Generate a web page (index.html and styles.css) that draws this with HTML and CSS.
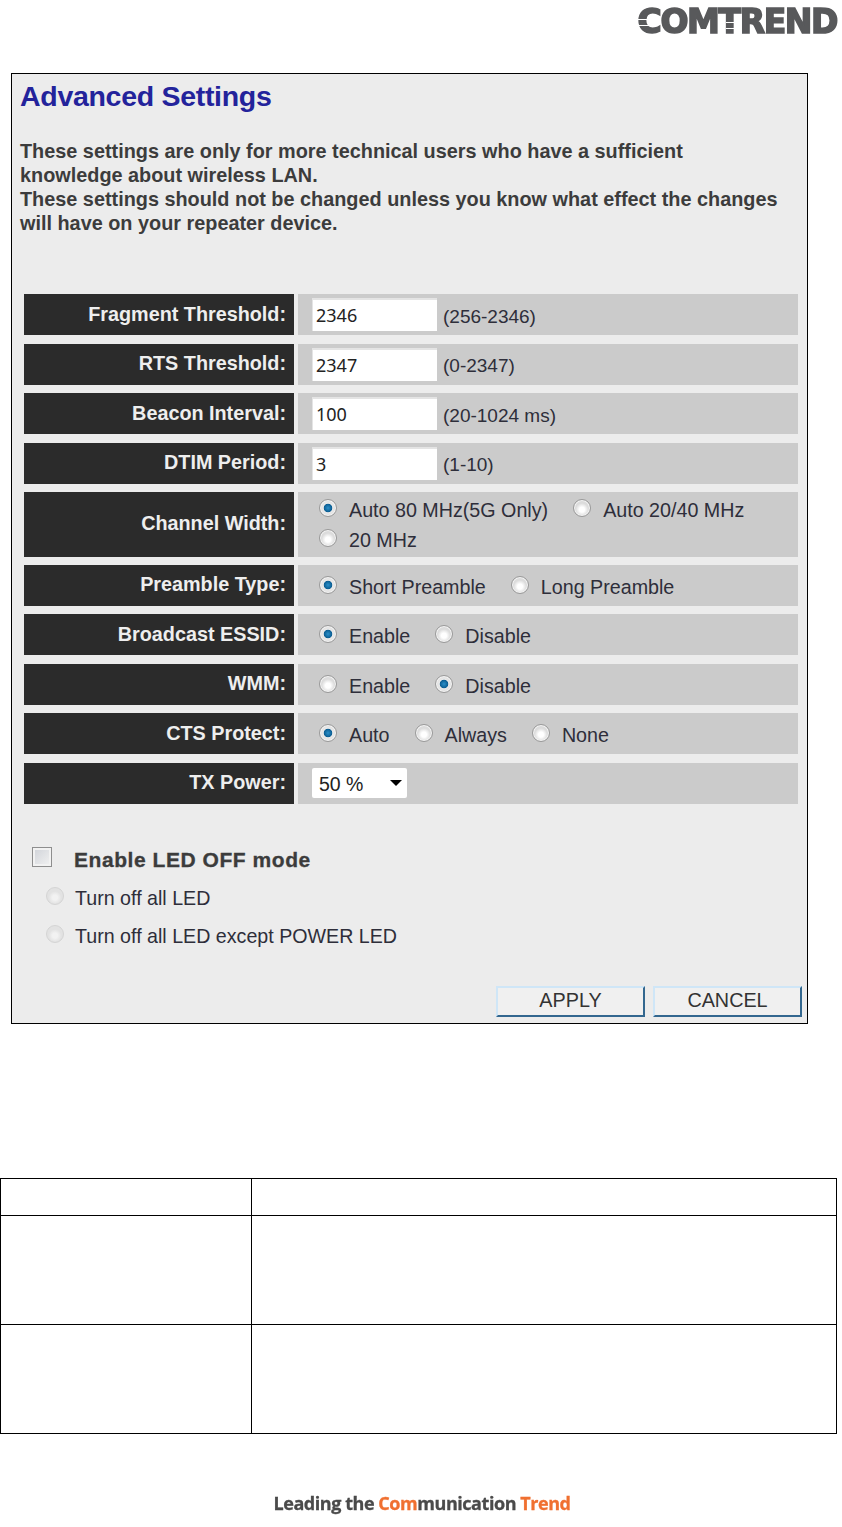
FILE: index.html
```html
<!DOCTYPE html>
<html lang="en">
<head>
  <meta charset="UTF-8">
  <title>Advanced Settings</title>
  <link rel="stylesheet" href="styles.css">
</head>
<body>
  <div class="logo-bar">
    <div class="logo">
      COMTREND
      <span class="stripes stripes-c"></span>
      <span class="stripes stripes-t"></span>
    </div>
  </div>

  <div class="panel">
    <h2>Advanced Settings</h2>
    <p class="intro">
      These settings are only for more technical users who have a sufficient<br>
      knowledge about wireless LAN.<br>
      These settings should not be changed unless you know what effect the changes<br>
      will have on your repeater device.
    </p>

    <div class="settings">
      <div class="row">
        <div class="label">Fragment Threshold:</div>
        <div class="value"><input class="num" type="text" value="2346"><span>(256-2346)</span></div>
      </div>
      <div class="row">
        <div class="label">RTS Threshold:</div>
        <div class="value"><input class="num" type="text" value="2347"><span>(0-2347)</span></div>
      </div>
      <div class="row">
        <div class="label">Beacon Interval:</div>
        <div class="value"><input class="num" type="text" value="100"><span>(20-1024 ms)</span></div>
      </div>
      <div class="row">
        <div class="label">DTIM Period:</div>
        <div class="value"><input class="num" type="text" value="3"><span>(1-10)</span></div>
      </div>
      <div class="row row-tall">
        <div class="label">Channel Width:</div>
        <div class="value value-stack">
          <div class="radios">
            <label><input type="radio" name="cw" checked>Auto 80 MHz(5G Only)</label>
            <label><input type="radio" name="cw">Auto 20/40 MHz</label>
          </div>
          <div class="radios">
            <label><input type="radio" name="cw">20 MHz</label>
          </div>
        </div>
      </div>
      <div class="row">
        <div class="label">Preamble Type:</div>
        <div class="value radios">
          <label><input type="radio" name="pre" checked>Short Preamble</label>
          <label><input type="radio" name="pre">Long Preamble</label>
        </div>
      </div>
      <div class="row">
        <div class="label">Broadcast ESSID:</div>
        <div class="value radios">
          <label><input type="radio" name="essid" checked>Enable</label>
          <label><input type="radio" name="essid">Disable</label>
        </div>
      </div>
      <div class="row">
        <div class="label">WMM:</div>
        <div class="value radios">
          <label><input type="radio" name="wmm">Enable</label>
          <label><input type="radio" name="wmm" checked>Disable</label>
        </div>
      </div>
      <div class="row">
        <div class="label">CTS Protect:</div>
        <div class="value radios">
          <label><input type="radio" name="cts" checked>Auto</label>
          <label><input type="radio" name="cts">Always</label>
          <label><input type="radio" name="cts">None</label>
        </div>
      </div>
      <div class="row">
        <div class="label">TX Power:</div>
        <div class="value">
          <div class="select">50 %<span class="arrow"></span></div>
        </div>
      </div>
    </div>

    <div class="led">
      <label class="led-title"><input type="checkbox">Enable LED OFF mode</label>
      <label class="led-option"><input type="radio" name="led" disabled>Turn off all LED</label>
      <label class="led-option"><input type="radio" name="led" disabled>Turn off all LED except POWER LED</label>
    </div>

    <div class="buttons">
      <button>APPLY</button>
      <button>CANCEL</button>
    </div>
  </div>

  <table class="doc-table">
    <tr class="head"><td class="first"></td><td></td></tr>
    <tr><td class="first"></td><td></td></tr>
    <tr><td class="first"></td><td></td></tr>
  </table>

  <div class="slogan">Leading the <span class="orange">Com</span>munication <span class="orange">Trend</span></div>
</body>
</html>
```

FILE: styles.css
```css
body {
  margin: 0;
  background: white;
  font-family: "Liberation Sans", Arial, sans-serif;
  color: #333;
}

.logo-bar {
  height: 73px;
  display: flex;
  justify-content: flex-end;
  padding-right: 5px;
  box-sizing: border-box;
}
.logo {
  position: relative;
  height: 44px;
  margin-top: 2px;
  font-family: "DejaVu Sans", sans-serif;
  font-weight: bold;
  font-size: 33px;
  line-height: 40px;
  letter-spacing: -1.4px;
  color: #58595b;
  -webkit-text-stroke: 1.6px #58595b;
  filter: blur(0.4px);
}
.stripes {
  position: absolute;
  height: 5px;
  border-top: 1px solid white;
  border-bottom: 1px solid white;
}
.stripes-c {
  left: -2px;
  width: 15px;
  top: 17px;
}
.stripes-t {
  left: 88px;
  width: 12px;
  top: 20px;
}

.panel {
  width: 795px;
  height: 949px;
  margin-left: 11px;
  border: 1px solid black;
  background: #ececec;
  display: flex;
  flex-direction: column;
}
h2 {
  margin: 5px 0 0 8px;
  font-size: 28.5px;
  line-height: 34px;
  letter-spacing: -0.3px;
  color: #23239b;
}
.intro {
  margin: 26px 0 0 8px;
  font-size: 19.85px;
  font-weight: bold;
  line-height: 24px;
  color: #3c3c3c;
}

.settings {
  margin: 59.4px 9px 0 12px;
  display: flex;
  flex-direction: column;
  gap: 8.4px;
}
.row {
  display: grid;
  grid-template-columns: 270px 1fr;
  column-gap: 4px;
  height: 41px;
}
.row-tall {
  height: 64.6px;
}
.label {
  background: #2b2b2b;
  color: #eee;
  font-size: 19.8px;
  font-weight: bold;
  text-align: right;
  padding-right: 8px;
  display: flex;
  align-items: center;
  justify-content: flex-end;
  padding-bottom: 1px;
  box-sizing: border-box;
}
.value {
  background: #cbcbcb;
  display: flex;
  align-items: center;
  padding-left: 14px;
  font-size: 19.7px;
  color: #2e2e3a;
}
.value span {
  font-size: 19px;
  padding-top: 4px;
}
.value-stack {
  flex-direction: column;
  align-items: flex-start;
  justify-content: center;
  gap: 6px;
  padding-left: 21px;
  padding-top: 2px;
  box-sizing: border-box;
}
.num {
  width: 125px;
  height: 33px;
  box-sizing: border-box;
  margin-right: 6px;
  padding: 0 3px 1px;
  border: none;
  border-top: 2px solid #e4e4e4;
  border-left: 1px solid #e4e4e4;
  background: white;
  font-family: "Noto Sans", sans-serif;
  font-size: 18px;
  color: #222;
}
.radios {
  display: flex;
  align-items: center;
  gap: 25px;
  line-height: 24px;
}
.value.radios {
  padding-left: 21px;
  padding-top: 3px;
  box-sizing: border-box;
}
.radios label {
  display: flex;
  align-items: center;
}

input[type="radio"] {
  appearance: none;
  width: 18px;
  height: 18px;
  margin: -4px 12px 0 0;
  border: 1px solid #9a9a9a;
  border-radius: 50%;
  background: radial-gradient(circle closest-side at 50% 60%, #fff 40%, #dcdcdc 100%);
  box-shadow: inset 0 0 0 1px #f4f4f4;
}
input[type="radio"]:checked {
  background: radial-gradient(circle closest-side, #2a8fc9 0, #0c5f94 48%, #e8e8e8 58%, #e0e0e0 100%);
}
input[type="radio"]:disabled {
  border-color: #d4d4d4;
  background: radial-gradient(circle closest-side at 50% 60%, #f2f2f2 40%, #e2e2e2 100%);
  box-shadow: none;
}

.select {
  width: 95px;
  height: 30px;
  box-sizing: border-box;
  padding: 2px 0 0 7px;
  background: white;
  border-radius: 2px;
  display: flex;
  align-items: center;
  font-size: 19.5px;
  color: #222;
  position: relative;
}
.arrow {
  position: absolute;
  right: 5px;
  top: 12px;
  padding: 0 !important;
  border-left: 6px solid transparent;
  border-right: 6px solid transparent;
  border-top: 6px solid black;
}

.led {
  margin: 41.6px 0 0 20px;
  display: flex;
  flex-direction: column;
}
.led-title {
  display: flex;
  align-items: center;
  font-size: 21px;
  font-weight: bold;
  letter-spacing: 0.55px;
  -webkit-text-stroke: 0.3px #3c3c3c;
  color: #3c3c3c;
  height: 30px;
}
.led-title input {
  appearance: none;
  width: 20px;
  height: 20px;
  margin: -6px 22px 0 0;
  box-sizing: border-box;
  border: 1px solid #8e8e8e;
  background: linear-gradient(135deg, #cfd2d8, #f2f2f2);
  box-shadow: inset 0 0 0 2px #f2f2f2;
}
.led-option {
  display: flex;
  align-items: center;
  height: 38px;
  padding-left: 14px;
  font-size: 19.65px;
  color: #2e2e3a;
}
.led-option input {
  margin-right: 11px !important;
}
.led-title + .led-option {
  margin-top: 4px;
}

.buttons {
  margin-top: auto;
  margin-bottom: 6px;
  padding-right: 5px;
  display: flex;
  justify-content: flex-end;
  gap: 8px;
}
button {
  width: 149px;
  height: 31px;
  box-sizing: border-box;
  padding: 0 0 3px;
  border: 2px solid;
  border-color: #cfe6f7 #33678f #33678f #cfe6f7;
  background: #f0f0f0;
  font-family: "Liberation Sans", Arial, sans-serif;
  font-size: 19.8px;
  color: #333;
}

.doc-table {
  width: 837px;
  margin-top: 154px;
  border-collapse: collapse;
  table-layout: fixed;
}
.doc-table td {
  border: 1px solid black;
  height: 108px;
  padding: 0;
}
.doc-table .head td {
  height: 36px;
}
.doc-table .first {
  width: 250px;
}

.slogan {
  margin-top: 57px;
  text-align: center;
  padding-left: 2px;
  font-family: "Open Sans", sans-serif;
  font-size: 18px;
  font-weight: bold;
  letter-spacing: -0.45px;
  -webkit-text-stroke: 0.3px;
  line-height: 24px;
  color: #4a4a4a;
  filter: blur(0.5px);
}
.orange {
  color: #f07030;
}
```
